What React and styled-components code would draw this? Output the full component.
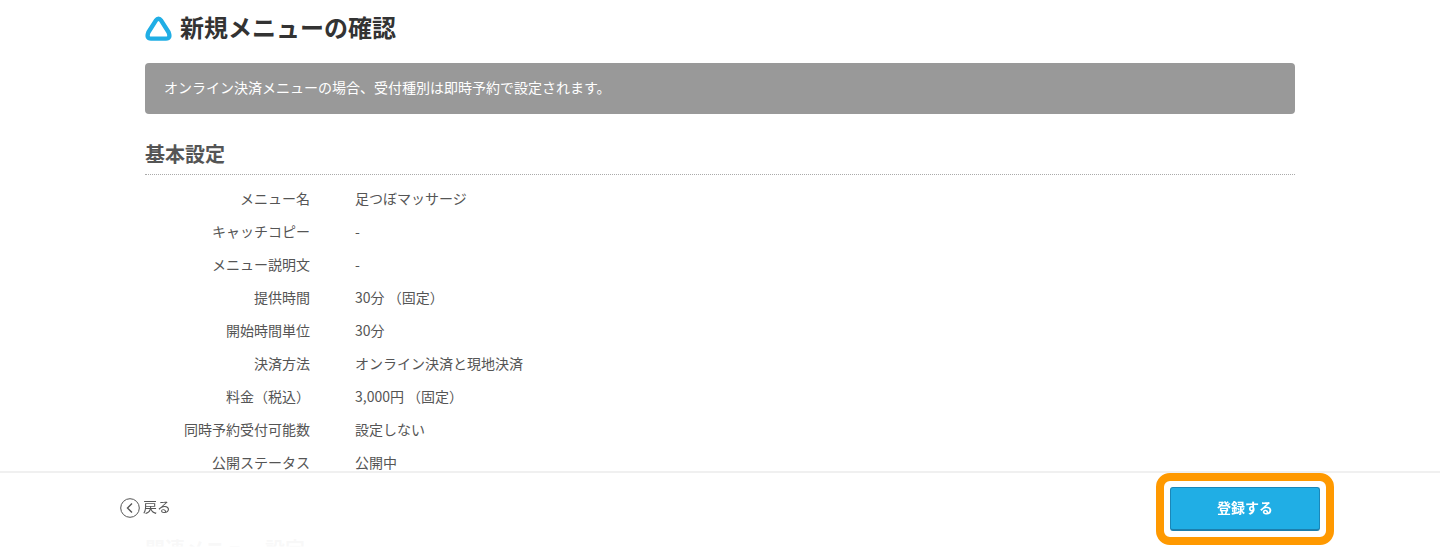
import React from "react";
import styled, { createGlobalStyle } from "styled-components";

const Global = createGlobalStyle`
  html, body { margin: 0; padding: 0; background: #fff; height: 554px; overflow: hidden; }
  body { font-family: "Noto Sans CJK JP", "Noto Sans", sans-serif; color: #555; }
`;
const Main = styled.main`
  width: 1150px;
  margin: 0 0 0 145px;
  padding-top: 10px;
`;
const TitleRow = styled.div`
  display: flex;
  align-items: center;
  gap: 8px;
  height: 34px;
`;
const Title = styled.h1`
  margin: 0;
  font-size: 24px;
  line-height: 34px;
  font-weight: 700;
  color: #333;
`;
const Notice = styled.div`
  margin-top: 19px;
  height: 51px;
  box-sizing: border-box;
  padding: 0 19px 3px;
  display: flex;
  align-items: center;
  background: #999;
  border-radius: 4px;
  color: #fff;
  font-size: 14px;
`;
const SectionTitle = styled.h2`
  margin: 26px 0 0;
  height: 34px;
  font-size: 20px;
  line-height: 28px;
  font-weight: 700;
  color: #555;
  border-bottom: 1px dotted #aaa;
`;
const Rows = styled.dl`
  margin: 7px 0 0;
  display: grid;
  grid-template-columns: 165px 1fr;
  column-gap: 45px;
  grid-auto-rows: 33px;
  font-size: 14px;
  line-height: 33px;
  color: #555;
`;
const Label = styled.dt`
  text-align: right;
`;
const Value = styled.dd`
  margin: 0;
`;
const NextTitle = styled.h2`
  margin: 56px 0 0;
  font-size: 20px;
  line-height: 28px;
  font-weight: 700;
  color: #555;
`;
const Footer = styled.footer`
  position: fixed;
  left: 0;
  right: 0;
  top: 471px;
  height: 83px;
  box-sizing: border-box;
  border-top: 2px solid #f0f0f0;
  background: linear-gradient(rgba(255, 255, 255, 0.96) 73px, #fff 74px);
  display: flex;
  align-items: flex-start;
  justify-content: space-between;
  padding: 0 120px;
`;
const Back = styled.a`
  display: flex;
  align-items: flex-start;
  gap: 3px;
  margin-top: 25px;
  font-size: 14px;
  line-height: 16px;
  color: #555;
`;
const Highlight = styled.div`
  box-sizing: border-box;
  width: 178px;
  height: 72px;
  margin-right: -14px;
  border: 8px solid #ff9900;
  border-radius: 14px;
  background: #fff;
  display: flex;
  align-items: center;
  justify-content: center;
`;
const Submit = styled.button`
  width: 150px;
  height: 44px;
  box-sizing: border-box;
  border: 1px solid #1b87b8;
  border-bottom: 2px solid #1b7fae;
  border-radius: 3px;
  background: #20aee5;
  color: #fff;
  font: 700 14px/18px "Noto Sans CJK JP", sans-serif;
  padding: 0 0 3px;
`;

const rows = [
  ["メニュー名", "足つぼマッサージ"],
  ["キャッチコピー", "-"],
  ["メニュー説明文", "-"],
  ["提供時間", "30分 （固定）"],
  ["開始時間単位", "30分"],
  ["決済方法", "オンライン決済と現地決済"],
  ["料金（税込）", "3,000円 （固定）"],
  ["同時予約受付可能数", "設定しない"],
  ["公開ステータス", "公開中"],
];

export default function App() {
  return (
    <>
      <Global />
      <Main>
        <TitleRow>
          <svg width="27" height="28" viewBox="0 0 27 28" fill="none">
            <path
              d="M10.8 7.6 Q13.5 3.8 16.2 7.6 L23.6 19.2 Q26 25.6 21 25.6 L6 25.6 Q1 25.6 3.4 19.2 Z"
              stroke="#20aee5"
              strokeWidth="4.4"
              strokeLinejoin="round"
            />
          </svg>
          <Title>新規メニューの確認</Title>
        </TitleRow>
        <Notice>オンライン決済メニューの場合、受付種別は即時予約で設定されます。</Notice>
        <SectionTitle>基本設定</SectionTitle>
        <Rows>
          {rows.map(([k, v]) => (
            <React.Fragment key={k}>
              <Label>{k}</Label>
              <Value>{v}</Value>
            </React.Fragment>
          ))}
        </Rows>
        <NextTitle>関連メニュー設定</NextTitle>
      </Main>
      <Footer>
        <Back>
          <svg width="20" height="20" viewBox="0 0 20 20" fill="none">
            <circle cx="10" cy="10" r="9.3" stroke="#555" strokeWidth="1" />
            <path d="M12 5.5 L7.5 10 L12 14.5" stroke="#555" strokeWidth="1.4" />
          </svg>
          戻る
        </Back>
        <Highlight>
          <Submit>登録する</Submit>
        </Highlight>
      </Footer>
    </>
  );
}
